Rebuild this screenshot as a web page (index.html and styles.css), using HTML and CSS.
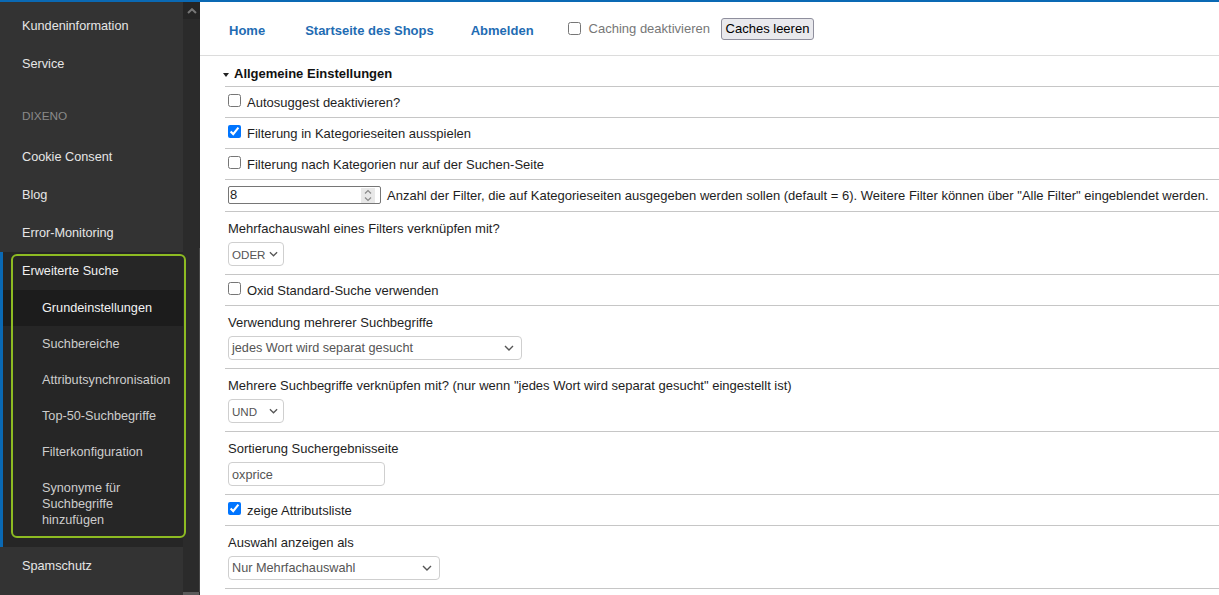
FILE: index.html
```html
<!DOCTYPE html>
<html lang="de">
<head>
<meta charset="utf-8">
<title>Erweiterte Suche – Grundeinstellungen</title>
<link rel="stylesheet" href="styles.css">
</head>
<body>
<div class="topbar"></div>
<div class="app">
  <aside class="sidebar">
    <nav class="side-nav">
      <a class="side-item">Kundeninformation</a>
      <a class="side-item">Service</a>
      <div class="side-heading">DIXENO</div>
      <a class="side-item">Cookie Consent</a>
      <a class="side-item">Blog</a>
      <a class="side-item">Error-Monitoring</a>
      <div class="side-group">
        <div class="group-box">
          <a class="group-title">Erweiterte Suche</a>
          <a class="sub-item active">Grundeinstellungen</a>
          <a class="sub-item">Suchbereiche</a>
          <a class="sub-item">Attributsynchronisation</a>
          <a class="sub-item">Top-50-Suchbegriffe</a>
          <a class="sub-item">Filterkonfiguration</a>
          <a class="sub-item multi">Synonyme für<br>Suchbegriffe<br>hinzufügen</a>
        </div>
      </div>
      <a class="side-item">Spamschutz</a>
    </nav>
    <div class="side-scroll">
      <div class="scroll-up">
        <svg width="10" height="6" viewBox="0 0 10 6"><path d="M1 5 L5 1.2 L9 5" fill="none" stroke="#777" stroke-width="2"/></svg>
      </div>
      <div class="scroll-track"></div>
      <div class="scroll-end"></div>
    </div>
  </aside>

  <main class="main">
    <header class="nav">
      <a class="nav-link home">Home</a>
      <a class="nav-link shop">Startseite des Shops</a>
      <a class="nav-link logout">Abmelden</a>
      <label class="cache-toggle"><input type="checkbox" class="cb"><span>Caching deaktivieren</span></label>
      <button class="btn">Caches leeren</button>
    </header>

    <section class="settings">
      <h2 class="section-title"><span class="caret"></span>Allgemeine Einstellungen</h2>
      <div class="form">
        <div class="row check">
          <input type="checkbox" class="cb"><span class="txt">Autosuggest deaktivieren?</span>
        </div>
        <div class="row check">
          <input type="checkbox" class="cb" checked><span class="txt">Filterung in Kategorieseiten ausspielen</span>
        </div>
        <div class="row check">
          <input type="checkbox" class="cb"><span class="txt">Filterung nach Kategorien nur auf der Suchen-Seite</span>
        </div>
        <div class="row number">
          <div class="num-input">
            <span class="num-val">8</span>
            <span class="spin">
              <svg width="14" height="15" viewBox="0 0 14 15"><path d="M4 5.5 L7 2.5 L10 5.5" fill="none" stroke="#8a8a8a" stroke-width="1.2"/><path d="M4 9.5 L7 12.5 L10 9.5" fill="none" stroke="#8a8a8a" stroke-width="1.2"/></svg>
            </span>
          </div>
          <span class="txt desc">Anzahl der Filter, die auf Kategorieseiten ausgegeben werden sollen (default = 6). Weitere Filter können über "Alle Filter" eingeblendet werden.</span>
        </div>
        <div class="row field">
          <div class="label">Mehrfachauswahl eines Filters verknüpfen mit?</div>
          <div class="select w-small"><span>ODER</span><svg width="9" height="6" viewBox="0 0 10 6"><path d="M1 1 L5 5 L9 1" fill="none" stroke="#555" stroke-width="1.4"/></svg></div>
        </div>
        <div class="row check">
          <input type="checkbox" class="cb"><span class="txt">Oxid Standard-Suche verwenden</span>
        </div>
        <div class="row field">
          <div class="label">Verwendung mehrerer Suchbegriffe</div>
          <div class="select w-wide"><span>jedes Wort wird separat gesucht</span><svg width="10" height="6" viewBox="0 0 10 6"><path d="M1 1 L5 5 L9 1" fill="none" stroke="#555" stroke-width="1.4"/></svg></div>
        </div>
        <div class="row field">
          <div class="label">Mehrere Suchbegriffe verknüpfen mit? (nur wenn "jedes Wort wird separat gesucht" eingestellt ist)</div>
          <div class="select w-small"><span>UND</span><svg width="9" height="6" viewBox="0 0 10 6"><path d="M1 1 L5 5 L9 1" fill="none" stroke="#555" stroke-width="1.4"/></svg></div>
        </div>
        <div class="row field">
          <div class="label">Sortierung Suchergebnisseite</div>
          <div class="text-input">oxprice</div>
        </div>
        <div class="row check">
          <input type="checkbox" class="cb" checked><span class="txt">zeige Attributsliste</span>
        </div>
        <div class="row field">
          <div class="label">Auswahl anzeigen als</div>
          <div class="select w-mid"><span>Nur Mehrfachauswahl</span><svg width="10" height="6" viewBox="0 0 10 6"><path d="M1 1 L5 5 L9 1" fill="none" stroke="#555" stroke-width="1.4"/></svg></div>
        </div>
      </div>
    </section>
  </main>
</div>
</body>
</html>
```

FILE: styles.css
```css
* { box-sizing: border-box; }

html, body {
  margin: 0;
  padding: 0;
  height: 100%;
  overflow: hidden;
  background: #fff;
  font-family: "Liberation Sans", Arial, sans-serif;
  font-size: 13px;
  color: #1e1e1e;
}

.topbar {
  height: 2px;
  background: #0a69b4;
}

.app {
  display: flex;
  height: 593px;
}

/* ---------- Sidebar ---------- */
.sidebar {
  width: 200px;
  flex: none;
  display: flex;
  background: #333;
}

.side-nav {
  width: 183px;
  flex: none;
  display: flex;
  flex-direction: column;
  font-size: 12.7px;
}

.side-item {
  display: block;
  height: 38px;
  line-height: 38px;
  padding: 0 0 0 22px;
  color: #e6e6e6;
  text-decoration: none;
  white-space: nowrap;
}
.side-item:first-child {
  margin-top: 5px;
}

.side-heading {
  padding: 25px 0 14px 22px;
  line-height: 16px;
  font-size: 11.8px;
  color: #8a8a8a;
}

.side-group {
  background: #262626;
  border-left: 3px solid #0a69b4;
  padding: 2px 0 9px 8px;
}

.group-box {
  position: relative;
  z-index: 1;
  width: 175px;
  border-radius: 6px;
  padding: 2px 0;
}
.group-box::after {
  content: "";
  position: absolute;
  inset: 0;
  border: 2px solid #8dbb22;
  border-radius: 6px;
  pointer-events: none;
}

.group-title {
  display: block;
  line-height: 30px;
  padding: 0 0 4px 11px;
  color: #f0f0f0;
}

.sub-item {
  display: block;
  height: 36px;
  line-height: 36px;
  padding-left: 39px;
  margin-left: -8px;
  margin-right: 3px;
  color: #cdcdcd;
  white-space: nowrap;
}
.sub-item.active {
  background: #1c1c1c;
  color: #f2f2f2;
}
.sub-item.multi {
  height: auto;
  line-height: 16px;
  padding-top: 10px;
  padding-bottom: 8px;
}

.side-scroll {
  width: 17px;
  flex: none;
  display: flex;
  flex-direction: column;
  background: #2b2b2b;
}
.scroll-up {
  height: 17px;
  background: #252525;
  display: flex;
  align-items: center;
  justify-content: center;
}
.scroll-track {
  flex: 1;
  margin-top: 229px;
  border-right: 1px solid #474747;
}
.scroll-end {
  height: 3px;
  background: #5a5a5a;
  margin-right: 1px;
}

/* ---------- Main ---------- */
.main {
  flex: 1;
  min-width: 0;
}

.nav {
  height: 54px;
  border-bottom: 1px solid #dcdcdc;
  display: flex;
  align-items: center;
  padding-left: 29px;
}

.nav-link {
  font-weight: bold;
  color: #1f6cb3;
  padding-top: 4px;
  white-space: nowrap;
}
.nav-link.shop { margin-left: 40px; }
.nav-link.logout { margin-left: 37px; }

.cache-toggle {
  display: flex;
  align-items: center;
  margin-left: 34px;
  color: #777;
  white-space: nowrap;
}
.cache-toggle .cb { margin: 0 8px 0 0; }

.btn {
  margin-left: 11px;
  width: 93px;
  height: 22px;
  padding: 0;
  font-family: "Liberation Sans", Arial, sans-serif;
  font-size: 13px;
  color: #000;
  background: #e9e9ed;
  border: 1px solid #8f8f9d;
  border-radius: 3px;
}

.section-title {
  margin: 0;
  padding: 10px 0 4px 23px;
  line-height: 16px;
  font-size: 13px;
  font-weight: bold;
  color: #111;
  display: flex;
  align-items: center;
}
.caret {
  width: 0;
  height: 0;
  border-left: 3.5px solid transparent;
  border-right: 3.5px solid transparent;
  border-top: 4px solid #222;
  margin: 1px 5px 0 0;
}

.form {
  margin-left: 25px;
  border-top: 1px solid #c6c6c6;
}

.row {
  border-bottom: 1px solid #c6c6c6;
  padding-left: 3px;
}

.cb {
  width: 13px;
  height: 13px;
  margin: 0;
  flex: none;
}

.row.check {
  height: 31px;
  display: flex;
  align-items: flex-start;
  padding-top: 7px;
}
.row.check .txt {
  line-height: 16px;
  padding-top: 1px;
  margin-left: 6px;
}

.row.number {
  height: 32px;
  display: flex;
  align-items: center;
  padding-top: 6px;
  padding-bottom: 7px;
}
.num-input {
  width: 153px;
  height: 18px;
  border: 1px solid #767676;
  border-radius: 2px;
  display: flex;
  align-items: center;
  justify-content: space-between;
  padding: 0 5px 0 1px;
}
.num-val { line-height: 16px; }
.spin {
  width: 14px;
  height: 15px;
  background: #e8e8e8;
  display: flex;
}
.desc {
  margin-left: 6px;
  white-space: nowrap;
  line-height: 16px;
  padding-top: 2px;
}

.row.field {
  padding-top: 9px;
  padding-bottom: 8px;
}
.label {
  line-height: 16px;
  white-space: nowrap;
}

.select,
.text-input {
  margin-top: 5px;
  height: 24px;
  border: 1px solid #cfcfcf;
  border-radius: 4px;
  color: #555;
  font-size: 12.7px;
  display: flex;
  align-items: center;
}
.select {
  justify-content: space-between;
  padding: 0 7px 0 3px;
}
.select svg { flex: none; }
.w-small { width: 56px; font-size: 11.6px; padding-right: 5px; }
.w-wide { width: 294px; }
.w-mid { width: 212px; }
.text-input {
  width: 157px;
  padding-left: 3px;
  padding-top: 2px;
}
```
